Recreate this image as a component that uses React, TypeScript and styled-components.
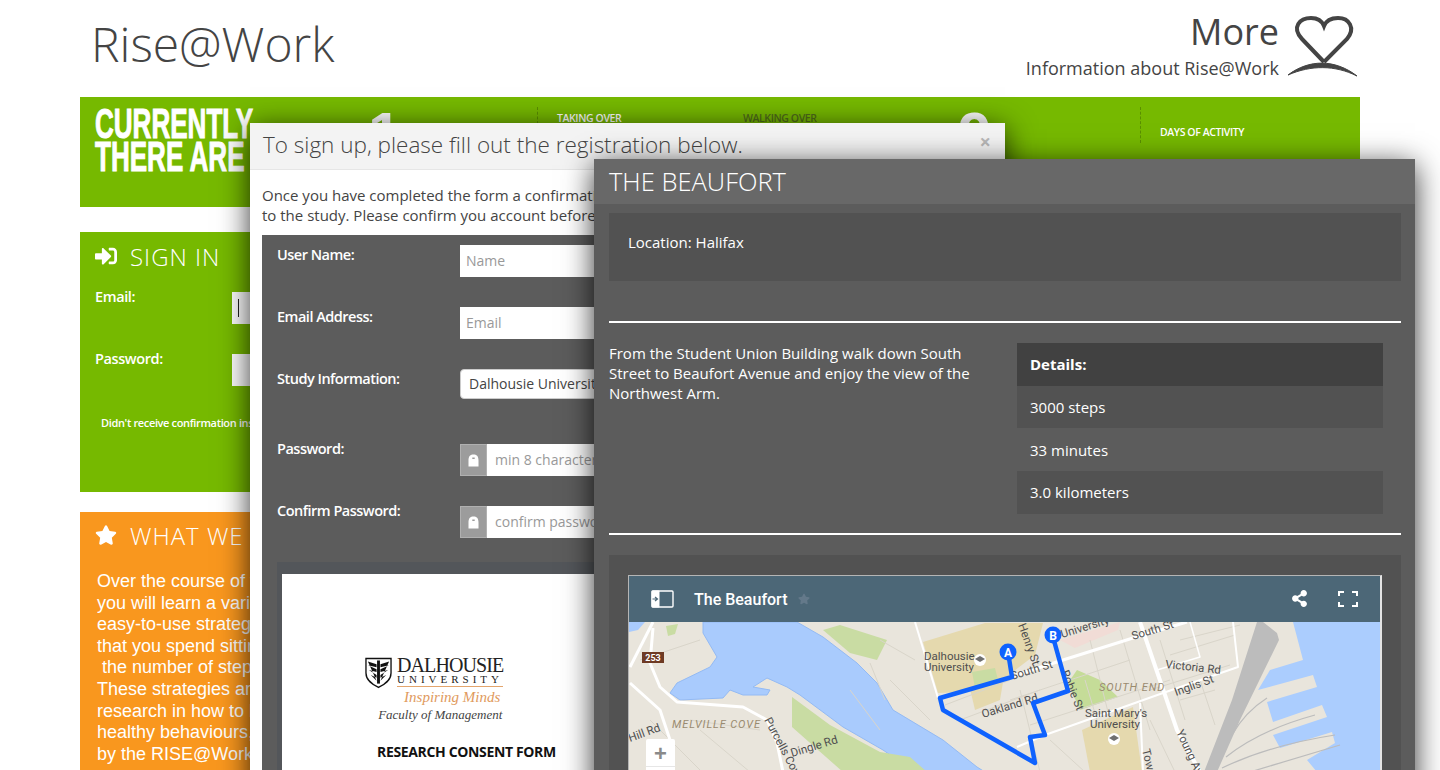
import React, { ReactElement } from "react"
import styled, { createGlobalStyle } from "styled-components"
import { FaShareAlt, FaSignInAlt, FaStar } from "react-icons/fa"

// ************
// data
// ************

const WHAT_WE_LINES = [
	"Over the course of the program",
	"you will learn a variety of simple,",
	"easy-to-use strategies to cut the time",
	"that you spend sitting and to increase",
	"\u00a0the number of steps you take.",
	"These strategies are based on",
	"research in how to build lasting",
	"healthy behaviours, and are supported",
	"by the RISE@Work team.",
]

const DETAILS = ["3000 steps", "33 minutes", "3.0 kilometers"]

// ************
// map drawing
// ************

function RouteMap(): ReactElement {
	return (
		<MapSvg viewBox="629 622 752 150">
			<rect x="629" y="622" width="752" height="150" fill="#e9e5dc" />

			{/* water */}
			<path
				d="M703 622 L797 622 L823 637 L857 663 L877 683 L893 710 L943 740 L977 767 L985 772 L915 772 L883 750 L843 727 L800 695 L787 687 L767 678 L753 687 L770 690 L767 695 L743 695 L730 690 L723 698 L680 700 L670 693 L677 683 L710 667 L717 657 L703 633 Z"
				fill="#a9cbfd"
				stroke="#93baf4"
			/>
			<path
				d="M1293 622 L1303 660 L1270 670 L1258 690 L1313 675 L1317 687 L1267 702 L1273 722 L1322 705 L1327 717 L1273 735 L1280 748 L1332 732 L1335 743 L1307 760 L1317 772 L1381 772 L1381 622 Z"
				fill="#abcdfe"
			/>
			<path d="M629 622 L645 622 L638 630 L629 632 Z" fill="#a9cbfd" />

			{/* parks and campuses */}
			<path d="M792 697 L830 725 L880 752 L910 757 L927 772 L843 772 L792 727 Z" fill="#c9dca3" />
			<path d="M823 630 L840 625 L887 640 L877 660 L850 653 Z" fill="#c9dca3" />
			<path d="M666 626 L678 624 L675 634 L668 636 Z" fill="#c9dca3" />
			<path d="M923 642 L985 623 L1043 623 L1035 655 L1005 678 L965 692 L938 693 Z" fill="#e5d9ae" />
			<path d="M968 680 L1005 670 L1000 700 L975 710 Z" fill="#e5d9ae" />
			<path d="M972 672 L995 668 L998 680 L975 688 Z" fill="#c9dca3" />
			<path d="M1082 730 L1133 707 L1142 772 L1090 772 Z" fill="#e5d9ae" />
			<path d="M1068 683 L1077 670 L1100 680 L1118 697 L1080 710 Z" fill="#c5dc98" />
			<path d="M1060 640 L1120 622 L1118 630 L1075 648 Z" fill="#f1dcd6" />

			{/* street grid */}
			<g stroke="#d9d5ca" strokeWidth="1" fill="none">
				<path d="M1010 700 L1130 660 M1030 725 L1170 680 M1090 640 L1110 720 M1120 630 L1150 730" />
				<path d="M1180 640 L1240 625 M1170 655 L1235 635 M1150 690 L1230 665 M1200 680 L1215 725" />
				<path d="M945 705 L1010 680 M960 720 L1040 690 M1100 730 L1085 680 M1020 690 L1040 772" />
				<path d="M850 690 L880 730 M890 680 L930 720 M870 663 L885 700 M915 660 L880 640" />
				<path d="M640 660 L700 640 M650 720 L700 770 M690 720 L760 730 M700 730 L750 772" />
				<path d="M1050 740 L1085 772 M1150 720 L1175 772 M1180 700 L1215 690 M1160 640 L1185 720" />
			</g>

			{/* rail yard */}
			<path d="M1257 622 L1263 622 L1277 633 L1279 640 L1240 720 L1217 772 L1204 772 L1232 700 Z" fill="#bcbcbc" />
			<g stroke="#bcbcbc" fill="none" strokeWidth="1.2">
				<path d="M1267 698 Q1245 712 1232 735 M1315 715 Q1260 730 1226 757 M1335 735 Q1270 745 1222 768 M1340 745 L1250 772" />
			</g>

			{/* roads */}
			<g stroke="#ffffff" fill="none" strokeLinejoin="round">
				<path d="M653 622 L630 667" strokeWidth="3" />
				<path d="M653 628 L650 663 L660 687 L677 702 L743 707 L767 720 L777 743 L783 772" strokeWidth="3" />
				<path d="M630 683 L660 710 L670 740" strokeWidth="3" />
				<path d="M915 622 L938 698" strokeWidth="2" />
				<path d="M1010 677 L1063 660 L1133 638 L1187 622" strokeWidth="3" />
				<path d="M1140 622 L1177 730 L1200 772" strokeWidth="4" />
				<path d="M1017 747 L1045 735 L1163 693 L1238 667 L1233 622" strokeWidth="2" />
				<path d="M1157 670 L1200 657 L1190 622" strokeWidth="1.5" />
				<path d="M1140 703 L1143 772" strokeWidth="2" />
			</g>

			{/* labels */}
			<MapLabel x="924" y="660">Dalhousie</MapLabel>
			<MapLabel x="924" y="671">University</MapLabel>
			<MapLabel x="1085" y="717">Saint Mary's</MapLabel>
			<MapLabel x="1090" y="728">University</MapLabel>
			<AreaLabel x="672" y="728">MELVILLE COVE</AreaLabel>
			<AreaLabel x="1099" y="691">SOUTH END</AreaLabel>
			<MapLabel transform="translate(1133 640) rotate(-17)">South St</MapLabel>
			<MapLabel transform="translate(1012 680) rotate(-17)">South St</MapLabel>
			<MapLabel transform="translate(1062 638) rotate(-17)">University</MapLabel>
			<MapLabel transform="translate(1165 668) rotate(6)">Victoria Rd</MapLabel>
			<MapLabel transform="translate(1176 696) rotate(-20)">Inglis St</MapLabel>
			<MapLabel transform="translate(983 718) rotate(-17)">Oakland Rd</MapLabel>
			<MapLabel transform="translate(1018 625) rotate(70)">Henry St</MapLabel>
			<MapLabel transform="translate(1061 672) rotate(68)">Robie St</MapLabel>
			<MapLabel transform="translate(1176 732) rotate(65)">Young Ave</MapLabel>
			<MapLabel transform="translate(1142 750) rotate(76)">Tower</MapLabel>
			<MapLabel transform="translate(764 720) rotate(62)">Purcells Cove</MapLabel>
			<MapLabel transform="translate(792 757) rotate(-17)">Dingle Rd</MapLabel>
			<MapLabel transform="translate(630 742) rotate(-20)">Hill Rd</MapLabel>

			{/* highway shield */}
			<rect x="642" y="652" width="22" height="11" fill="#6e3a24" />
			<ShieldText x="653" y="661">253</ShieldText>

			{/* school markers */}
			<circle cx="980" cy="660" r="6" fill="#ffffff" />
			<path d="M975 659 L980 656 L985 659 L980 662 Z" fill="#6f6f6f" />
			<circle cx="1114" cy="739" r="6" fill="#ffffff" />
			<path d="M1109 738 L1114 735 L1119 738 L1114 741 Z" fill="#6f6f6f" />

			{/* route */}
			<path
				d="M1008 652 L1012 677 L940 698 L943 710 L1035 763 L1030 737 L1045 735 L1033 703 L1068 691 L1053 637"
				fill="none"
				stroke="#0f62fe"
				strokeWidth="4.5"
				strokeLinejoin="round"
			/>
			<circle cx="1008" cy="652" r="8.5" fill="#0f62fe" />
			<MarkerText x="1008" y="656.5">A</MarkerText>
			<circle cx="1053" cy="635" r="8.5" fill="#0f62fe" />
			<MarkerText x="1053" y="639.5">B</MarkerText>
		</MapSvg>
	)
}

function HeartLogo(): ReactElement {
	return (
		<HeartSvg viewBox="1285 12 78 68">
			<path
				d="M1325 62 L1303 39 C1292 27 1301 18 1312 18 C1319 18 1323 21 1325 26 C1327 21 1332 18 1339 18 C1350 18 1357 28 1348 39 L1325 62"
				fill="none"
				stroke="#444444"
				strokeWidth="4"
			/>
			<path d="M1289 75 C1310 59 1336 59 1358 76 C1336 65 1312 65 1289 75 Z" fill="#444444" stroke="#444444" />
		</HeartSvg>
	)
}

function CrestLogo(): ReactElement {
	return (
		<CrestSvg viewBox="0 0 28 32">
			<path d="M1 1 H27 V16 C27 24 20 28 14 31 C8 28 1 24 1 16 Z" fill="#ffffff" stroke="#111111" strokeWidth="1.4" />
			<path d="M12.5 3 H15.5 V27 H12.5 Z" fill="#111111" />
			<path
				d="M3 4 L12 7 V10 L3 8 L12 12 V15 L4 13 L12 18 V21 L6 18 L12 24 Z M25 4 L16 7 V10 L25 8 L16 12 V15 L24 13 L16 18 V21 L22 18 L16 24 Z"
				fill="#111111"
			/>
		</CrestSvg>
	)
}

function LockGlyph(): ReactElement {
	return (
		<svg width="11" height="13" viewBox="0 0 11 13" fill="#ffffff">
			<path d="M0.5 6.5 C0.5 2 2.5 0.5 5.5 0.5 C8.5 0.5 10.5 2 10.5 6.5 V12.5 H0.5 Z M4.3 3.5 V5 H6.7 V3.5 Z" fillRule="evenodd" />
		</svg>
	)
}

// ************
// component
// ************

export default function App(): ReactElement {
	return (
		<Page>
			<GlobalStyle />

			<Header>
				<Title>Rise@Work</Title>
				<MoreLink>
					<MoreText>
						<MoreHeading>More</MoreHeading>
						<MoreNote>Information about Rise@Work</MoreNote>
					</MoreText>
					<HeartLogo />
				</MoreLink>
			</Header>

			<Banner>
				<Headline>
					CURRENTLY
					<br />
					THERE ARE
				</Headline>
				<BigNumber $shift={-10}>1</BigNumber>
				<StatLabel>TAKING OVER</StatLabel>
				<StatLabel $plain>WALKING OVER</StatLabel>
				<BigNumber>9</BigNumber>
				<StatLabel $middle>DAYS OF ACTIVITY</StatLabel>
			</Banner>

			<SignInCard>
				<CardTitle>
					<FaSignInAlt />
					<span>SIGN IN</span>
				</CardTitle>
				<SignInRow>
					<SignInLabel>Email:</SignInLabel>
					<SignInField>
						<Caret />
					</SignInField>
				</SignInRow>
				<SignInRow>
					<SignInLabel>Password:</SignInLabel>
					<SignInField />
				</SignInRow>
				<ResendNote>Didn't receive confirmation instructions?</ResendNote>
			</SignInCard>

			<WhatWeCard>
				<CardTitle>
					<FaStar />
					<span>WHAT WE DO</span>
				</CardTitle>
				<WhatWeText>
					{WHAT_WE_LINES.map((line) => (
						<div key={line}>{line}</div>
					))}
				</WhatWeText>
			</WhatWeCard>

			<SignUpModal>
				<SignUpHeader>
					<SignUpTitle>To sign up, please fill out the registration below.</SignUpTitle>
					<CloseMark>×</CloseMark>
				</SignUpHeader>
				<SignUpBody>
					<SignUpIntro>
						Once you have completed the form a confirmation email will be sent to you.
						<br />
						to the study. Please confirm you account before signing in.
					</SignUpIntro>
					<FormPanel>
						<FormRow>
							<FormLabel>User Name:</FormLabel>
							<TextInput placeholder="Name" readOnly />
						</FormRow>
						<FormRow>
							<FormLabel>Email Address:</FormLabel>
							<TextInput placeholder="Email" readOnly />
						</FormRow>
						<FormRow $height={75}>
							<FormLabel>Study Information:</FormLabel>
							<SelectBox>Dalhousie University</SelectBox>
						</FormRow>
						<FormRow>
							<FormLabel $lift>Password:</FormLabel>
							<LockedInput>
								<LockBox>
									<LockGlyph />
								</LockBox>
								<LockedField placeholder="min 8 characters" readOnly />
							</LockedInput>
						</FormRow>
						<FormRow $height={56}>
							<FormLabel $lift>Confirm Password:</FormLabel>
							<LockedInput>
								<LockBox>
									<LockGlyph />
								</LockBox>
								<LockedField placeholder="confirm password" readOnly />
							</LockedInput>
						</FormRow>
						<ConsentFrame>
							<ConsentPage>
								<LogoBlock>
									<LogoTop>
										<CrestLogo />
										<LogoNames>
											<LogoName>DALHOUSIE</LogoName>
											<LogoSub>UNIVERSITY</LogoSub>
										</LogoNames>
									</LogoTop>
									<LogoMotto>Inspiring Minds</LogoMotto>
									<LogoFaculty>Faculty of Management</LogoFaculty>
								</LogoBlock>
								<ConsentTitle>RESEARCH CONSENT FORM</ConsentTitle>
							</ConsentPage>
						</ConsentFrame>
					</FormPanel>
				</SignUpBody>
			</SignUpModal>

			<RouteModal>
				<RouteHeader>THE BEAUFORT</RouteHeader>
				<RouteBody>
					<LocationPanel>Location: Halifax</LocationPanel>
					<Rule />
					<InfoRow>
						<InfoText>
							From the Student Union Building walk down South Street to Beaufort Avenue and enjoy the view of the
							Northwest Arm.
						</InfoText>
						<DetailsTable>
							<DetailsHead>Details:</DetailsHead>
							{DETAILS.map((item, index) => (
								<DetailsRow key={item} $shaded={index !== 1}>
									{item}
								</DetailsRow>
							))}
						</DetailsTable>
					</InfoRow>
					<Rule />
					<MapPanel>
						<MapFrame>
							<MapBar>
								<MapBarLeft>
									<svg width="23" height="18" viewBox="0 0 23 18" fill="none">
										<rect x="1" y="1" width="21" height="16" rx="1" stroke="#ffffff" strokeWidth="1.4" />
										<rect x="0.5" y="0.5" width="8" height="17" rx="1" fill="#ffffff" />
										<path d="M1.5 9 H6 M4 7 L6.5 9 L4 11" stroke="#4c6777" strokeWidth="1.2" />
									</svg>
									<MapBarTitle>The Beaufort</MapBarTitle>
									<MapStar>
										<FaStar />
									</MapStar>
								</MapBarLeft>
								<MapBarRight>
									<FaShareAlt />
									<svg width="20" height="16" viewBox="0 0 20 16" fill="none" stroke="#ffffff" strokeWidth="2">
										<path d="M1 5 V1 H6 M14 1 H19 V5 M1 11 V15 H6 M14 15 H19 V11" />
									</svg>
								</MapBarRight>
							</MapBar>
							<MapCanvas>
								<RouteMap />
								<ZoomControl>
									<ZoomButton>+</ZoomButton>
								</ZoomControl>
							</MapCanvas>
						</MapFrame>
					</MapPanel>
				</RouteBody>
			</RouteModal>
		</Page>
	)
}

// ************
// styles
// ************

const GlobalStyle = createGlobalStyle`
	html, body {
		height: 770px;
		margin: 0;
		overflow: hidden;
		background: #ffffff;
	}
	* {
		box-sizing: border-box;
	}
`
const Page = styled.div`
	position: relative;
	height: 770px;
	padding: 0 80px;
	overflow: hidden;

	font-family: "Open Sans", sans-serif;
	color: #444444;
`

// header

const Header = styled.header`
	display: flex;
	justify-content: space-between;
	align-items: flex-start;

	height: 97px;
	padding: 0 0 0 11px;
`
const Title = styled.h1`
	margin: 9px 0 0;

	font-size: 48px;
	font-weight: 300;
	line-height: 70px;
`
const MoreLink = styled.div`
	display: flex;
	align-items: flex-start;
	gap: 9px;

	padding-top: 12px;
`
const MoreText = styled.div`
	display: grid;
	justify-items: end;
`
const MoreHeading = styled.span`
	font-size: 36px;
	line-height: 40px;
`
const MoreNote = styled.span`
	margin-top: 3px;

	font-size: 18px;
	line-height: 26px;
`
const HeartSvg = styled.svg`
	width: 78px;
	height: 68px;
	margin: 0 -2px 0 -4px;
`

// banner

const Banner = styled.section`
	display: grid;
	grid-template-columns: 283px 159px 206px 215px 182px 1fr;
	align-items: start;

	height: 110px;
	padding: 10px 0 0 15px;
	margin-bottom: 25px;

	background: #76b900;
	color: #ffffff;
`
const Headline = styled.div`
	font-family: "Liberation Sans", sans-serif;
	font-size: 42px;
	font-weight: 700;
	line-height: 33px;
	white-space: nowrap;
	-webkit-text-stroke: 1px #ffffff;
	transform-origin: left top;
	transform: scaleX(0.62);
`
const BigNumber = styled.div<{ $shift?: number }>`
	margin: -3px 0 0 ${({ $shift }) => $shift || 0}px;

	font-family: "Liberation Sans", sans-serif;
	font-size: 60px;
	font-weight: 700;
	line-height: 60px;
`
const StatLabel = styled.div<{ $plain?: boolean; $middle?: boolean }>`
	display: flex;
	align-items: ${({ $middle }) => ($middle ? "center" : "flex-start")};

	height: 36px;
	padding-left: ${({ $plain }) => ($plain ? "0" : "19px")};
	padding-top: ${({ $middle }) => ($middle ? "14px" : "4px")};
	border-left: ${({ $plain }) => ($plain ? "none" : "1px dashed #5a8f00")};

	color: ${({ $plain }) => ($plain ? "#4f6d1a" : "#ffffff")};
	font-size: 10.5px;
	font-weight: 600;
	letter-spacing: -0.4px;
	line-height: 14px;
`

// left column cards

const SignInCard = styled.section`
	width: 500px;
	height: 260px;
	padding: 7px 15px 0;
	margin-bottom: 20px;

	background: #76b900;
	color: #ffffff;
`
const WhatWeCard = styled.section`
	width: 500px;
	height: 300px;
	padding: 6px 15px 0;

	background: #f9971e;
	color: #ffffff;
`
const CardTitle = styled.h2`
	display: flex;
	align-items: center;
	gap: 13px;

	height: 34px;
	margin: 0 0 19px;

	font-size: 24px;
	font-weight: 300;
	letter-spacing: 1px;
	white-space: nowrap;

	svg {
		width: 22px;
		height: 22px;
	}
`
const SignInRow = styled.div`
	display: grid;
	grid-template-columns: 137px 1fr;
	align-items: start;

	height: 62px;
`
const SignInLabel = styled.label`
	margin-top: -5px;

	font-size: 14.5px;
	font-weight: 600;
	letter-spacing: -0.4px;
	line-height: 20px;
`
const SignInField = styled.div`
	display: flex;
	align-items: center;

	height: 32px;
	padding-left: 6px;

	background: #ffffff;
`
const Caret = styled.span`
	width: 1px;
	height: 18px;

	background: #222222;
`
const ResendNote = styled.div`
	margin: -1px 0 0 6px;

	font-size: 11px;
	font-weight: 600;
	letter-spacing: -0.35px;
	line-height: 15px;
	white-space: nowrap;
`
const WhatWeText = styled.div`
	margin: 4px 0 0 2px;

	font-family: "Liberation Sans", Arial, sans-serif;
	font-size: 18px;
	line-height: 21.6px;
	white-space: nowrap;
`

// sign up modal

const SignUpModal = styled.section`
	position: absolute;
	top: 123px;
	left: 250px;

	width: 755px;
	height: 760px;

	background: #ffffff;
	box-shadow: 0 6px 28px rgba(0, 0, 0, 0.8);
`
const SignUpHeader = styled.header`
	display: flex;
	justify-content: space-between;
	align-items: center;

	height: 47px;
	padding: 0 14px 4px 13px;
	border-bottom: 1px solid #e6e6e6;

	background: #f3f3f3;
`
const SignUpTitle = styled.h3`
	margin: 0;

	font-size: 22.5px;
	font-weight: 300;
	white-space: nowrap;
`
const CloseMark = styled.span`
	margin-top: -6px;

	font-size: 20px;
	font-weight: 700;
	color: #b8b8b8;
`
const SignUpBody = styled.div`
	padding: 15px 12px 0;
`
const SignUpIntro = styled.p`
	margin: 0 0 10px;

	font-size: 15px;
	line-height: 20px;
	white-space: nowrap;
`
const FormPanel = styled.div`
	padding: 10px 15px 0;

	background: #5c5c5c;
	color: #ffffff;
`
const FormRow = styled.div<{ $height?: number }>`
	display: grid;
	grid-template-columns: 183px 1fr;
	align-items: start;

	height: ${({ $height }) => $height || 62}px;
`
const FormLabel = styled.label<{ $lift?: boolean }>`
	margin-top: ${({ $lift }) => ($lift ? "-5px" : "0")};

	font-size: 14.5px;
	font-weight: 600;
	letter-spacing: -0.5px;
	line-height: 20px;
`
const TextInput = styled.input`
	width: 400px;
	height: 32px;
	padding: 0 6px 2px;
	border: none;
	border-radius: 0;

	font-family: inherit;
	font-size: 14px;

	&::placeholder {
		color: #999999;
		opacity: 1;
	}
`
const SelectBox = styled.div`
	display: flex;
	align-items: center;

	width: 400px;
	height: 30px;
	padding: 0 0 2px 8px;
	border: 1px solid #cccccc;
	border-radius: 4px;

	background: #ffffff;
	color: #444444;
	font-size: 14px;
	white-space: nowrap;
`
const LockedInput = styled.div`
	display: flex;
	width: 400px;
	height: 32px;
`
const LockBox = styled.span`
	display: flex;
	justify-content: center;
	align-items: center;

	width: 27px;
	height: 32px;
	border: 1px solid #b0b0b0;

	background: #9c9c9c;
`
const LockedField = styled(TextInput)`
	flex: 1;
	width: auto;
	padding-left: 8px;
`
const ConsentFrame = styled.div`
	padding: 12px 0 0 5px;

	background: #53565a;
`
const ConsentPage = styled.div`
	display: grid;
	align-content: start;
	justify-items: start;

	width: 368px;
	height: 300px;
	padding: 83px 0 0 83px;

	background: #ffffff;
	color: #111111;
`
const LogoBlock = styled.div`
	display: grid;
	justify-items: end;

	width: 138px;
`
const LogoTop = styled.div`
	display: flex;
	gap: 5px;
`
const CrestSvg = styled.svg`
	width: 27px;
	height: 32px;
`
const LogoNames = styled.div`
	display: grid;
	align-content: start;

	height: 30px;
	border-bottom: 1px solid #e3a56d;

	font-family: "Liberation Serif", serif;
	color: #222222;
`
const LogoName = styled.span`
	font-size: 20px;
	line-height: 17px;
	letter-spacing: -0.9px;
	white-space: nowrap;
`
const LogoSub = styled.span`
	font-size: 11px;
	line-height: 11px;
	letter-spacing: 4px;
	white-space: nowrap;
`
const LogoMotto = styled.span`
	margin: 0 3px 0 0;

	font-family: "Liberation Serif", serif;
	font-size: 15px;
	font-style: italic;
	line-height: 17px;
	color: #df9a5d;
`
const LogoFaculty = styled.span`
	margin-right: 1px;

	font-family: "Liberation Serif", serif;
	font-size: 13px;
	font-style: italic;
	line-height: 17px;
	color: #444444;
	white-space: nowrap;
`
const ConsentTitle = styled.div`
	margin: 19px 0 0 12px;

	font-size: 14px;
	font-weight: 700;
	letter-spacing: -0.35px;
	line-height: 20px;
	white-space: nowrap;
`

// route modal

const RouteModal = styled.section`
	position: absolute;
	top: 159px;
	left: 594px;

	width: 821px;
	height: 700px;

	background: #5c5c5c;
	box-shadow: 0 6px 28px rgba(0, 0, 0, 0.8);
	color: #ffffff;
`
const RouteHeader = styled.header`
	display: flex;
	align-items: center;

	height: 45px;
	padding: 0 0 1px 15px;

	background: #686868;
	font-size: 25.5px;
	font-weight: 300;
`
const RouteBody = styled.div`
	padding: 9px 14px 0 15px;
`
const LocationPanel = styled.div`
	height: 68px;
	padding: 19px 19px 0;

	background: #525252;
	font-size: 15px;
	font-weight: 500;
	line-height: 20px;
`
const Rule = styled.hr`
	height: 2px;
	margin: 40px 0 20px;
	border: none;

	background: #ffffff;

	& ~ & {
		margin-top: 19px;
	}
`
const InfoRow = styled.div`
	display: grid;
	grid-template-columns: 408px 366px;
`
const InfoText = styled.p`
	margin: 0;
	max-width: 375px;

	font-size: 15px;
	font-weight: 500;
	line-height: 20px;
`
const DetailsTable = styled.div`
	display: grid;
	grid-auto-rows: 42.7px;
`
const DetailsHead = styled.div`
	display: flex;
	align-items: center;

	padding-left: 13px;

	background: #414141;
	font-size: 15px;
	font-weight: 700;
`
const DetailsRow = styled.div<{ $shaded: boolean }>`
	display: flex;
	align-items: center;

	padding-left: 13px;

	background: ${({ $shaded }) => ($shaded ? "#525252" : "transparent")};
	font-size: 15px;
	font-weight: 500;
`
const MapPanel = styled.div`
	height: 240px;
	padding: 20px 19px 0;

	background: #525252;
`
const MapFrame = styled.div`
	height: 240px;
	border: 1px solid #b5b5b5;
	border-width: 1px 2px 0 1px;
	border-right-color: #e4e4e4;
`
const MapBar = styled.div`
	display: flex;
	justify-content: space-between;
	align-items: center;

	height: 46px;
	padding: 0 22px;

	background: #4c6777;
`
const MapBarLeft = styled.div`
	display: flex;
	align-items: center;
`
const MapBarTitle = styled.span`
	margin: 2px 0 0 20px;

	font-family: Roboto, sans-serif;
	font-size: 16px;
	font-weight: 500;
`
const MapStar = styled.span`
	display: flex;
	margin-left: 11px;

	color: #64798a;

	svg {
		width: 12px;
		height: 12px;
	}
`
const MapBarRight = styled.div`
	display: flex;
	align-items: center;
	gap: 30px;

	svg:first-child {
		width: 17px;
		height: 17px;
	}
`
const MapCanvas = styled.div`
	position: relative;
	height: 150px;
	overflow: hidden;
`
const MapSvg = styled.svg`
	display: block;
	width: 752px;
	height: 150px;
`
const ZoomControl = styled.div`
	position: absolute;
	top: 117px;
	left: 17px;

	width: 29px;
	height: 60px;
	border-radius: 2px;

	background: #ffffff;
`
const ZoomButton = styled.div`
	height: 28px;
	border-bottom: 1px solid #e6e6e6;

	font-family: "Liberation Sans", sans-serif;
	font-size: 22px;
	font-weight: 700;
	line-height: 29px;
	text-align: center;
	color: #8a8a8a;
`
const MapLabel = styled.text`
	font-family: Roboto, sans-serif;
	font-size: 11.5px;
	fill: #4f4f4f;
`
const AreaLabel = styled.text`
	font-family: Roboto, sans-serif;
	font-size: 11px;
	font-style: italic;
	letter-spacing: 0.9px;
	fill: #9a8b70;
`
const ShieldText = styled.text`
	font-family: Roboto, sans-serif;
	font-size: 9px;
	font-weight: 700;
	text-anchor: middle;
	fill: #ffffff;
`
const MarkerText = styled.text`
	font-family: Roboto, sans-serif;
	font-size: 12px;
	font-weight: 700;
	text-anchor: middle;
	fill: #ffffff;
`
